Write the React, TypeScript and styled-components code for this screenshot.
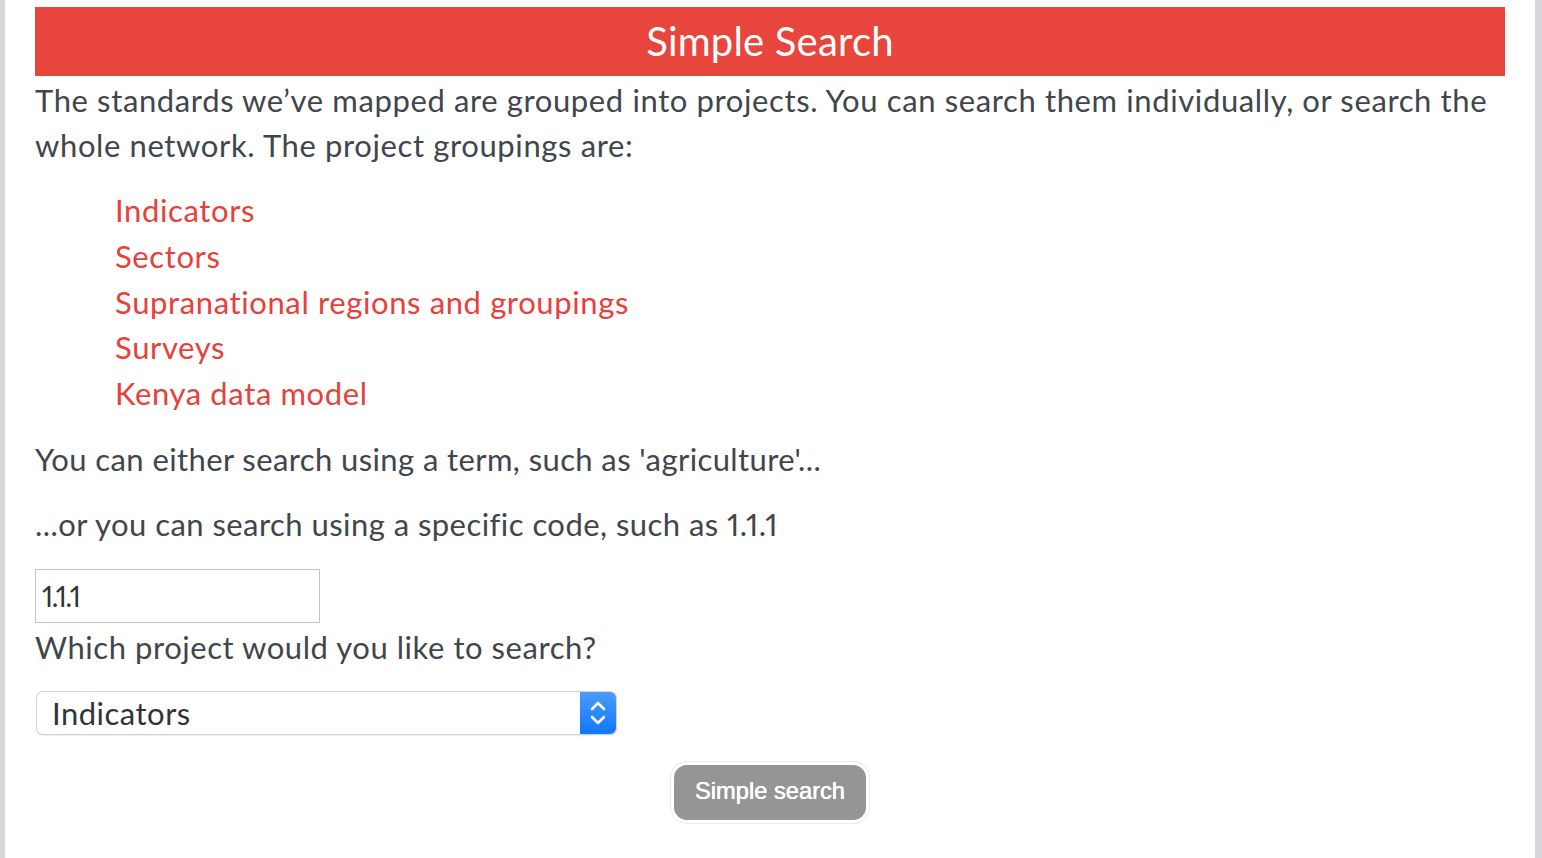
import React from "react";
import styled, { createGlobalStyle } from "styled-components";

const Global = createGlobalStyle`
  html, body { margin: 0; padding: 0; background: #d9d6dc; overflow: hidden; }
  body { font-family: Lato, "Noto Sans", sans-serif; font-variant-numeric: proportional-nums; }
  * { box-sizing: border-box; }
`;

const Page = styled.div`
  margin: 0 7px 0 5px;
  background: #ffffff;
  min-height: 858px;
  padding: 7px 30px 0 30px;
  color: #41454c;
`;

const Banner = styled.h1`
  margin: 0;
  height: 69px;
  background: #e8453c;
  color: #ffffff;
  font-weight: 400;
  font-size: 40px;
  letter-spacing: 0.2px;
  display: flex;
  align-items: center;
  justify-content: center;
  padding-bottom: 2px;
`;

const Para = styled.p<{ $top?: number; $ls?: number }>`
  margin: ${(p) => p.$top ?? 20}px 0 0 0;
  font-size: 31px;
  line-height: 45px;
  letter-spacing: ${(p) => p.$ls ?? 0.4}px;
`;

const LinkList = styled.ul`
  list-style: none;
  margin: 20px 0 0 0;
  padding: 0 0 0 80px;
`;

const LinkItem = styled.li`
  font-size: 31px;
  line-height: 45.8px;
  letter-spacing: 0.62px;
`;

const Link = styled.a`
  color: #e8403a;
  text-decoration: none;
`;

const CodeInput = styled.input`
  display: block;
  margin-top: 22px;
  width: 285px;
  height: 54px;
  border: 1px solid #c3c3c3;
  padding: 0 6px;
  font-family: Lato, "Noto Sans", sans-serif;
  font-variant-numeric: proportional-nums;
  font-size: 28px;
  letter-spacing: -1.3px;
  color: #333;
  outline: none;
`;

const SelectBox = styled.div`
  margin-top: 22px;
  width: 579px;
  height: 42px;
  margin-left: 2px;
  display: flex;
  border-radius: 6px;
  background: #fff;
  box-shadow: 0 0 0 1px #d4d4d4, 0 1px 2px rgba(0, 0, 0, 0.25);
  overflow: hidden;
`;

const NativeSelect = styled.select`
  flex: 1;
  appearance: none;
  border: none;
  background: transparent;
  padding: 0 0 0 15px;
  font-family: Lato, "Noto Sans", sans-serif;
  font-size: 31px;
  letter-spacing: 0.5px;
  color: #333;
  outline: none;
`;

const Stepper = styled.span`
  width: 36px;
  display: flex;
  align-items: center;
  justify-content: center;
  background: linear-gradient(#4a9bfe, #1176fb);
`;

const ButtonRow = styled.div`
  display: flex;
  justify-content: center;
  margin-top: 31px;
`;

const SearchButton = styled.button`
  width: 192px;
  height: 55px;
  border: none;
  border-radius: 13px;
  background: #959595;
  color: #fff;
  font-family: "Liberation Sans", Arial, sans-serif;
  font-size: 23.7px;
  font-weight: 400;
  text-shadow: 0 0 0.7px #fff, 0 0 0.4px #fff;
  box-shadow: 0 0 0 3px #fff, 0 0 0 4px #ececec;
  padding: 0 0 2px 0;
`;

export default function App() {
  const projects = [
    "Indicators",
    "Sectors",
    "Supranational regions and groupings",
    "Surveys",
    "Kenya data model",
  ];
  return (
    <>
      <Global />
      <Page>
        <Banner>Simple Search</Banner>
        <Para $top={2} $ls={0.62}>
          The standards we’ve mapped are grouped into projects. You can search them individually, or search the whole
          network. The project groupings are:
        </Para>
        <LinkList>
          {projects.map((p) => (
            <LinkItem key={p}>
              <Link href="#">{p}</Link>
            </LinkItem>
          ))}
        </LinkList>
        <Para>You can either search using a term, such as 'agriculture'...</Para>
        <Para $ls={0.45}>...or you can search using a specific code, such as 1.1.1</Para>
        <CodeInput defaultValue="1.1.1" />
        <Para $top={2} $ls={0.55}>Which project would you like to search?</Para>
        <SelectBox>
          <NativeSelect defaultValue="Indicators">
            {projects.map((p) => (
              <option key={p}>{p}</option>
            ))}
          </NativeSelect>
          <Stepper>
            <svg width="18" height="30" viewBox="0 0 18 30" fill="none" stroke="#fff" strokeWidth="2.6" strokeLinecap="round" strokeLinejoin="round">
              <path d="M3 11 L9 5 L15 11" />
              <path d="M3 19 L9 25 L15 19" />
            </svg>
          </Stepper>
        </SelectBox>
        <ButtonRow>
          <SearchButton>Simple search</SearchButton>
        </ButtonRow>
      </Page>
    </>
  );
}
